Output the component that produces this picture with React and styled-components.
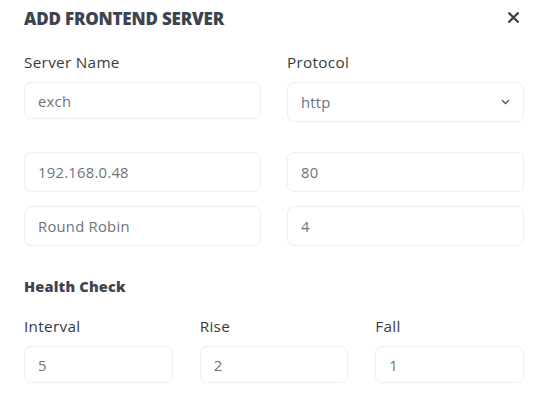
import * as React from 'react'
import styled, { createGlobalStyle } from 'styled-components'

const GlobalStyle = createGlobalStyle`
  html, body {
    margin: 0;
    padding: 0;
    background: #fff;
  }
  body {
    font-family: 'Open Sans', 'Noto Sans', sans-serif;
  }
`

const Modal = styled.div`
  width: 547px;
  box-sizing: border-box;
  padding: 8px 23px 20px 24px;
  background: #fff;
`

const Header = styled.div`
  display: flex;
  justify-content: space-between;
  align-items: flex-start;
  margin-bottom: 22px;
`

const Title = styled.h2`
  margin: 0;
  font-size: 17px;
  line-height: 22px;
  font-weight: 800;
  color: #3d4450;
  letter-spacing: -0.2px;
`

const CloseButton = styled.button`
  border: none;
  background: none;
  padding: 0;
  margin: 4px 5px 0 0;
  cursor: pointer;
  display: flex;
`

const Grid = styled.div`
  display: grid;
  grid-template-columns: ${(props) => `repeat(${props.cols}, 1fr)`};
  column-gap: ${(props) => props.gap}px;
  row-gap: 14px;
  margin-top: ${(props) => props.top || 0}px;
`

const Field = styled.div`
  display: flex;
  flex-direction: column;
`

const Label = styled.label`
  font-size: 15.3px;
  line-height: 20px;
  letter-spacing: 0.3px;
  color: #363a40;
  margin-bottom: 10px;
`

const Input = styled.input`
  box-sizing: border-box;
  width: 100%;
  height: ${(props) => props.h || 40}px;
  padding: 0 13px;
  border: 1px solid #eceef2;
  border-radius: 7px;
  font-family: inherit;
  font-size: 14.8px;
  letter-spacing: 0.25px;
  color: #6d7380;
  background: #fff;
  outline: none;
`

const SelectBox = styled.div`
  box-sizing: border-box;
  height: 40px;
  padding: 0 13px;
  border: 1px solid #eceef2;
  border-radius: 7px;
  display: flex;
  align-items: center;
  justify-content: space-between;
  font-size: 14.8px;
  letter-spacing: 0.25px;
  color: #6d7380;
`

const Section = styled.h3`
  margin: 32px 0 20px;
  font-size: 14.5px;
  line-height: 18px;
  letter-spacing: 0.2px;
  font-weight: 800;
  color: #3d4450;
`

const Chevron = () => (
  <svg width="9" height="6" viewBox="0 0 9 6" fill="none">
    <path d="M1 1.2 L4.5 4.6 L8 1.2" stroke="#555a62" strokeWidth="1.4" />
  </svg>
)

const CloseIcon = () => (
  <svg width="11" height="11" viewBox="0 0 11 11" fill="none">
    <path d="M1.2 1.2 L9.8 9.8 M9.8 1.2 L1.2 9.8" stroke="#3b3f45" strokeWidth="2.3" strokeLinecap="round" />
  </svg>
)

const App = () => {
  return (
    <>
      <GlobalStyle />
      <Modal>
        <Header>
          <Title>ADD FRONTEND SERVER</Title>
          <CloseButton aria-label="close">
            <CloseIcon />
          </CloseButton>
        </Header>

        <Grid cols={2} gap={26}>
          <Field>
            <Label>Server Name</Label>
            <Input h={37} defaultValue="exch" />
          </Field>
          <Field>
            <Label>Protocol</Label>
            <SelectBox>
              <span>http</span>
              <Chevron />
            </SelectBox>
          </Field>
        </Grid>

        <Grid cols={2} gap={26} top={30}>
          <Input defaultValue="192.168.0.48" />
          <Input defaultValue="80" />
          <Input defaultValue="Round Robin" />
          <Input defaultValue="4" />
        </Grid>

        <Section>Health Check</Section>

        <Grid cols={3} gap={27}>
          <Field>
            <Label>Interval</Label>
            <Input h={37} defaultValue="5" />
          </Field>
          <Field>
            <Label>Rise</Label>
            <Input h={37} defaultValue="2" />
          </Field>
          <Field>
            <Label>Fall</Label>
            <Input h={37} defaultValue="1" />
          </Field>
        </Grid>
      </Modal>
    </>
  )
}

export default App
